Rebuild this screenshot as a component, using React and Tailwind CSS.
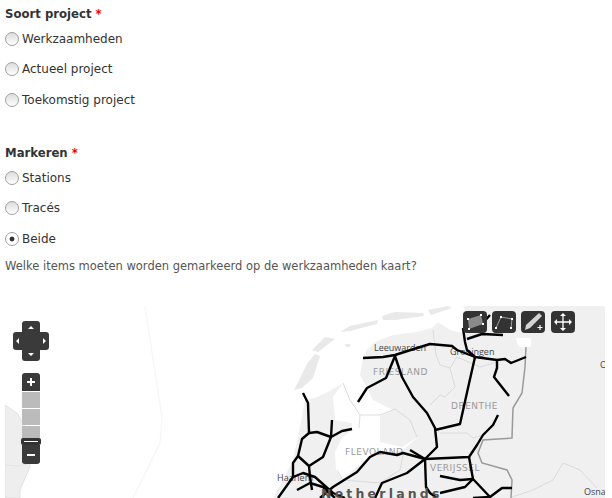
import React from 'react';

const rails = [
  '363,358 383,357 395,355 417,348 430,344 452,346 457,350 475,357 497,360 505,359 511,363 526,357',
  '497,360 497,368 494,377 509,396',
  '475,357 467,350 465,342 463,328',
  '467,339 482,334 503,335',
  '483,323 490,315',
  '475,357 468,388 460,424 435,430',
  '498,415 493,425 483,435 477,445 469,457 425,459',
  '469,457 473,479 490,497 502,488 512,488',
  '473,479 460,480 440,476',
  '473,479 465,487 440,493',
  '473,498 490,497',
  '395,356 402,377 413,397 427,413 435,428 437,447 425,459',
  '395,356 386,378 367,388 358,402',
  '425,459 410,450',
  '425,459 426,487 430,493 437,498',
  '425,459 407,473 382,483 375,498',
  '320,498 333,487 357,472 370,457 380,452 397,455 403,453 425,459',
  '303,393 308,403 309,433 302,439 298,456 293,463 293,477 278,498',
  '309,433 317,432 331,437 342,431 352,429',
  '332,420 331,437 323,457 309,466 298,456',
  '309,466 310,477 312,490',
  '293,477 303,473 315,477 333,493 345,498',
  '297,490 310,483 323,487 335,498',
];

const Radio = ({ label, checked }) => (
  <label className="flex items-center gap-[3px] h-[14px] text-[12px] leading-[14px] text-[#333]">
    <input
      type="radio"
      readOnly
      checked={!!checked}
      className={
        checked
          ? 'appearance-none w-[14px] h-[14px] ml-[5px] rounded-full border border-[#a0a0a0] bg-[radial-gradient(circle,#333_0,#333_2px,#fff_2.8px)]'
          : 'appearance-none w-[14px] h-[14px] ml-[5px] rounded-full border border-[#a0a0a0] bg-gradient-to-b from-[#dcdcdc] to-white'
      }
    />
    {label}
  </label>
);

const Req = () => <span className="text-[#e00]">*</span>;

const MapDrawing = () => (
  <svg viewBox="5 306 600 192" className="block w-[600px] h-[192px]">
    <rect x="5" y="306" width="600" height="192" fill="#fff" />
    {/* faint maritime line */}
    <polyline points="145,307 162,417 160,443 133,498" fill="none" stroke="#f7f7f7" strokeWidth="1.5" />
    {/* england side */}
    <polygon points="5,405 17,413 28,432 30,467 20,490 20,498 5,498" fill="#eeeeee" stroke="#d8d8d8" strokeWidth="0.7" />
    <polyline points="5,465 18,466 28,464" fill="none" stroke="#ddd" strokeWidth="0.7" />
    {/* mainland and germany */}
    <polygon
      points="273,498 283,480 293,460 300,427 305,400 315,398 328,392 343,383 360,373 363,358 367,350 375,342 393,335 417,332 432,328 438,322 450,330 463,333 470,320 463,306 605,306 605,498"
      fill="#f0f0f0"
    />
    {/* ijsselmeer and flevoland */}
    <polygon
      points="343,383 333,397 335,420 352,423 352,430 342,438 335,452 336,470 342,479 370,456 403,450 418,437 402,447 380,442 380,416 393,410 373,400 367,388 360,375 363,358"
      fill="#fff"
    />
    {/* dollard */}
    <polygon points="516,338 531,338 531,346 525,348 518,346" fill="#fff" />
    {/* islands */}
    <polygon points="340,332 350,326 378,320 377,324 350,331" fill="#e9e9e9" />
    <polygon points="382,316 395,312 423,313 424,316 395,320 383,320" fill="#e9e9e9" />
    <polygon points="428,310 448,306 452,308 431,315" fill="#e9e9e9" />
    <polygon points="312,350 325,337 335,339 322,349 318,352" fill="#e9e9e9" />
    <polygon points="315,354 320,356 313,378 302,388 294,390 300,378 307,364" fill="#e9e9e9" />
    <polygon points="345,344 350,344 350,347 346,347" fill="#e9e9e9" />
    {/* province borders */}
    <g fill="none" stroke="#d4d4d4" strokeWidth="0.8">
      <polyline points="343,383 350,400 360,415 380,415 395,409 410,420 417,437" />
      <polyline points="360,415 359,428" />
      <polyline points="440,365 450,368 455,387 445,397 440,395 430,405" />
      <polyline points="450,368 457,357 480,367 497,362" />
      <polyline points="440,433 467,433 473,438 483,435" />
      <polyline points="433,330 436,355 440,365" />
      <polyline points="512,497 533,490 553,480 563,463 580,470 597,488" />
      <polyline points="337,470 343,480 380,483 400,470 403,455" />
    </g>
    {/* border nl/de */}
    <polyline
      points="526,347 525,367 522,393 513,408 512,438 483,440 478,453 482,463 507,470 512,480 511,498"
      fill="none"
      stroke="#9a9a9a"
      strokeWidth="1.5"
    />
    {/* labels under the rails */}
    <g fontFamily="'DejaVu Sans', sans-serif" fill="#999" fontSize="9" letterSpacing="0.5">
      <text x="373" y="375">FRIESLAND</text>
      <text x="451" y="409">DRENTHE</text>
      <text x="345" y="455">FLEVOLAND</text>
      <text x="430" y="471">VERIJSSEL</text>
    </g>
    <g fontFamily="'Open Sans', sans-serif" fill="#444" fontSize="9">
      <text x="374" y="351">Leeuwarden</text>
      <text x="450" y="355">Groningen</text>
      <text x="277" y="481">Haarlem</text>
      <text x="584" y="495">Osnab</text>
      <text x="600" y="368">O</text>
    </g>
    {rails.map((points, i) => (
      <polyline key={i} points={points} fill="none" stroke="#000" strokeWidth="2.4" strokeLinejoin="round" />
    ))}
    <text x="321" y="498" fontFamily="'DejaVu Sans', sans-serif" fontSize="12.5" fontWeight="700" letterSpacing="3.2" fill="#555">Netherlands</text>
  </svg>
);

const ToolBtn = ({ left, children }) => (
  <div className={`absolute top-[5px] w-6 h-[22px] rounded-[4px] bg-[#333] ${left}`}>
    <svg viewBox="0 0 24 22" className="w-6 h-[22px]">{children}</svg>
  </div>
);

export default function App() {
  return (
    <div className="w-[612px] h-[498px] overflow-hidden bg-white font-['DejaVu_Sans',sans-serif]">
      <div className="pt-[7px] h-[306px]">
        <div className="ml-[5px] h-[14px] text-[11.7px] leading-[14px] font-bold text-[#333]">
          Soort project <Req />
        </div>
        <div className="mt-[10.6px] flex flex-col gap-[16.5px]">
          <Radio label="Werkzaamheden" />
          <Radio label="Actueel project" />
          <Radio label="Toekomstig project" />
        </div>
        <div className="mt-[39.4px] ml-[5px] h-[14px] text-[11.7px] leading-[14px] font-bold text-[#333]">
          Markeren <Req />
        </div>
        <div className="mt-[11px] flex flex-col gap-[16.5px]">
          <Radio label="Stations" />
          <Radio label="Tracés" />
          <Radio label="Beide" checked />
        </div>
        <p className="mt-[13px] ml-[5px] text-[11.5px] leading-[14px] text-[#555]">
          Welke items moeten worden gemarkeerd op de werkzaamheden kaart?
        </p>
      </div>

      <div className="relative ml-[5px] w-[600px] h-[192px]">
        <MapDrawing />

        {/* pan control */}
        <div className="absolute left-[17px] top-[15px] w-[18px] h-[40px] rounded-[3px] bg-[#3a3a3a]" />
        <div className="absolute left-[8px] top-[26px] w-[36px] h-[18px] rounded-[3px] bg-[#3a3a3a]" />
        <svg viewBox="0 0 36 40" className="absolute left-[8px] top-[15px] w-[36px] h-[40px]">
          <path d="M18 5l3 3h-6zM18 35l-3-3h6zM3 20l3-3v6zM33 20l-3-3v6z" fill="#fff" />
        </svg>

        {/* zoom control */}
        <div className="absolute left-[17px] top-[67px] w-[18px] flex flex-col">
          <div className="h-[18px] rounded-t-[3px] bg-[#3a3a3a] flex items-center justify-center">
            <svg viewBox="0 0 10 10" className="w-[10px] h-[10px]"><path d="M5 1v8M1 5h8" stroke="#fff" strokeWidth="2" /></svg>
          </div>
          <div className="mt-px h-4 bg-[#bbb]" />
          <div className="mt-px h-4 bg-[#bbb]" />
          <div className="mt-px h-[12px] bg-[#bbb]" />
          <div className="mt-[7px] h-[19px] rounded-b-[3px] bg-[#3a3a3a] flex items-center justify-center">
            <div className="w-2 h-[2px] bg-white" />
          </div>
        </div>
        <div className="absolute left-[16px] top-[132px] w-5 h-[7px] rounded-[2px] bg-[#333] flex items-center justify-center">
          <div className="w-[14px] h-px bg-white" />
        </div>

        {/* draw toolbar */}
        <ToolBtn left="left-[458px]">
          <path d="M5 8l13-4 2 9-14 5z" fill="#8a8a8a" />
          <path d="M4 7h2v2H4zM17 3h2v2h-2zM19 12h2v2h-2zM5 17h2v2H5z" fill="#fff" />
        </ToolBtn>
        <ToolBtn left="left-[487px]">
          <path d="M9 6l11 2-1 9M9 6l-5 11" fill="none" stroke="#ccc" strokeWidth="0.7" />
          <path d="M8 5h2v2H8zM19 7h2v2h-2zM18 16h2v2h-2zM3 16h2v2H3z" fill="#fff" />
        </ToolBtn>
        <ToolBtn left="left-[516px]">
          <path d="M18 2l3 3L9 17l-5 2 1-5z" fill="#d4d4d4" />
          <path d="M19 14v5M16.500 16.500h5" stroke="#fff" strokeWidth="1.2" />
        </ToolBtn>
        <ToolBtn left="left-[546px]">
          <path d="M12 4v14M5 11h14" stroke="#fff" strokeWidth="1.3" />
          <path d="M12 2l3 3H9zM12 20l-3-3h6zM3 11l3-3v6zM21 11l-3-3v6z" fill="#fff" />
        </ToolBtn>
      </div>
    </div>
  );
}
